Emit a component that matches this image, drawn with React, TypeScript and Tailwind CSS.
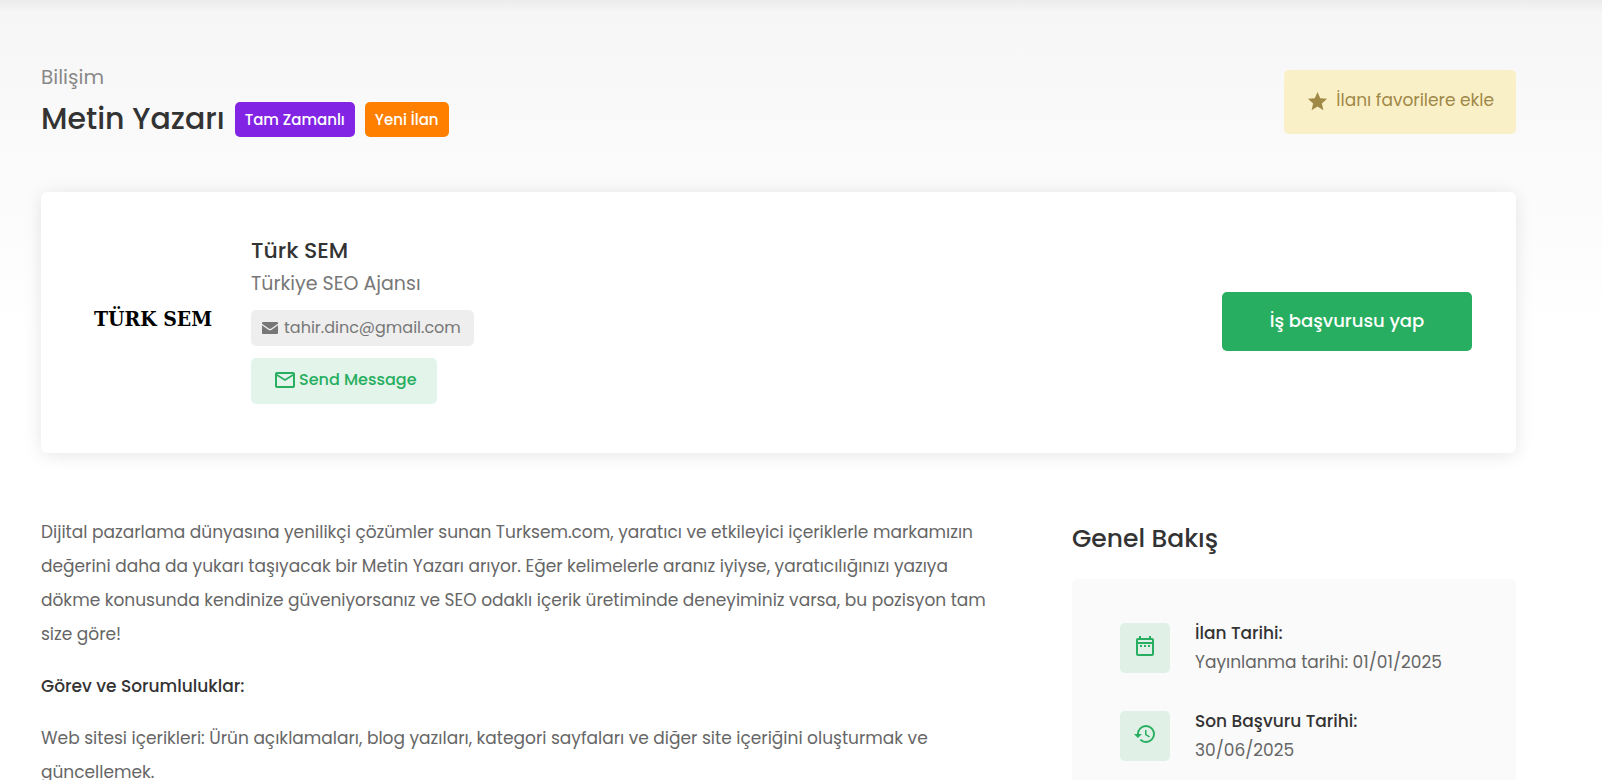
import React from "react";
import { MdHistory, MdMailOutline, MdOutlineDateRange, MdStar } from "react-icons/md";

interface OverviewItem {
  label: string;
  value: string;
  icon: React.ReactNode;
}

const overview: OverviewItem[] = [
  {
    label: "İlan Tarihi:",
    value: "Yayınlanma tarihi: 01/01/2025",
    icon: <MdOutlineDateRange size={24} />,
  },
  {
    label: "Son Başvuru Tarihi:",
    value: "30/06/2025",
    icon: <MdHistory size={24} />,
  },
];

function MailIcon() {
  return (
    <svg width="16" height="12" viewBox="0 0 16 12" fill="currentColor" aria-hidden="true">
      <path d="M1 0h14a1 1 0 0 1 1 1v.8L9.200 6.600a2 2 0 0 1-2.400 0L0 1.800V1a1 1 0 0 1 1-1z" />
      <path d="M0 3.200l6.300 4.500a3 3 0 0 0 3.400 0L16 3.200V11a1 1 0 0 1-1 1H1a1 1 0 0 1-1-1z" />
    </svg>
  );
}

function JobHeader() {
  return (
    <header className="flex items-start justify-between">
      <div>
        <p className="text-[20px] leading-[26px] text-[#888]">Bilişim</p>
        <div className="mt-2 flex items-center gap-[10px]">
          <h1 className="text-[30px] leading-[42px] font-medium text-[#333]">Metin Yazarı</h1>
          <span className="rounded-[5px] bg-[#8224e3] px-[10px] text-[15px] leading-[35px] font-medium text-white">
            Tam Zamanlı
          </span>
          <span className="rounded-[5px] bg-[#ff8000] px-[10px] text-[15px] leading-[35px] font-medium text-white">
            Yeni İlan
          </span>
        </div>
      </div>
      <button
        type="button"
        className="mt-[6px] flex h-16 items-center gap-[7px] rounded-[5px] bg-[#faf0c8] px-[22px] pb-0.5 text-[17px] text-[#a08847]"
      >
        <MdStar size={23} />
        İlanı favorilere ekle
      </button>
    </header>
  );
}

function CompanyCard() {
  return (
    <section className="mt-[52px] flex items-center justify-between rounded-md bg-white px-11 pt-[46px] pb-[49px] shadow-[0_2px_18px_rgba(0,0,0,0.1)]">
      <div className="flex items-center">
        <div className="mr-[30px] w-[136px] pb-1.5 text-center font-['DejaVu_Serif_Condensed','DejaVu_Serif',serif] text-[21px] leading-none font-bold whitespace-nowrap text-black">
          TÜRK SEM
        </div>
        <div className="flex flex-col items-start">
          <h2 className="text-[22px] leading-[26px] font-medium text-[#333]">Türk SEM</h2>
          <p className="mt-1.5 text-[19px] leading-7 text-[#777]">Türkiye SEO Ajansı</p>
          <span className="mt-3 flex h-9 items-center gap-[6px] rounded-[5px] bg-[#eee] pr-[13px] pl-[11px] text-[16px] text-[#777]">
            <MailIcon />
            tahir.dinc@gmail.com
          </span>
          <button
            type="button"
            className="mt-3 flex h-[46px] items-center gap-0.5 rounded-[5px] bg-[#e3f4ea] pr-5 pl-[22px] pb-0.5 text-[16px] font-medium text-[#27ae60]"
          >
            <MdMailOutline size={24} />
            Send Message
          </button>
        </div>
      </div>
      <button
        type="button"
        className="h-[59px] w-[250px] rounded-[5px] bg-[#27ae60] pb-0.5 text-[18px] font-medium text-white"
      >
        İş başvurusu yap
      </button>
    </section>
  );
}

function Description() {
  return (
    <article className="flex min-w-0 flex-1 flex-col gap-[18px] text-[17px] leading-[34px] text-[#666]">
      <p>
        Dijital pazarlama dünyasına yenilikçi çözümler sunan Turksem.com, yaratıcı ve etkileyici içeriklerle
        markamızın değerini daha da yukarı taşıyacak bir Metin Yazarı arıyor. Eğer kelimelerle aranız iyiyse,
        yaratıcılığınızı yazıya dökme konusunda kendinize güveniyorsanız ve SEO odaklı içerik üretiminde
        deneyiminiz varsa, bu pozisyon tam size göre!
      </p>
      <h3 className="font-medium text-[#333]">Görev ve Sorumluluklar:</h3>
      <p>
        Web sitesi içerikleri: Ürün açıklamaları, blog yazıları, kategori sayfaları ve diğer site içeriğini
        oluşturmak ve güncellemek.
      </p>
    </article>
  );
}

function Overview() {
  return (
    <aside className="w-[444px] shrink-0">
      <h2 className="mt-1.5 text-[25px] leading-9 font-medium text-[#333]">Genel Bakış</h2>
      <ul className="mt-[22px] flex flex-col gap-[30px] rounded-[5px] bg-[#fafafa] px-12 py-10">
        {overview.map((item) => (
          <li key={item.label} className="flex items-center gap-[25px]">
            <span className="flex size-[50px] items-center justify-center rounded-[5px] bg-[#e0f0e6] pb-1 text-[#27ae60]">
              {item.icon}
            </span>
            <div className="text-[17px] leading-[29px]">
              <p className="font-medium text-[#333]">{item.label}</p>
              <p className="text-[#666]">{item.value}</p>
            </div>
          </li>
        ))}
      </ul>
    </aside>
  );
}

export default function App() {
  return (
    <div className="min-h-screen bg-white bg-linear-to-b from-[#f6f6f6] to-white to-[330px] font-['Poppins','Inter',sans-serif]">
      <div className="h-3 bg-linear-to-b from-[#ebebeb] to-[#f6f6f6]" />
      <div className="pt-[52px] pr-[86px] pl-[41px]">
        <JobHeader />
        <CompanyCard />
        <div className="mt-[62px] flex gap-[72px]">
          <Description />
          <Overview />
        </div>
      </div>
    </div>
  );
}
